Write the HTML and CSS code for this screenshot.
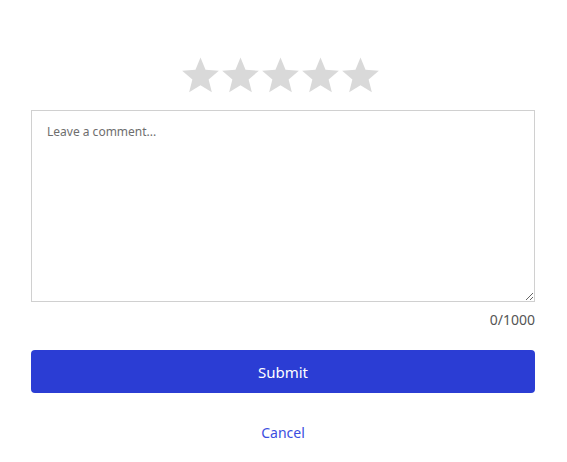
FILE: index.html
```html
<!DOCTYPE html>
<html lang="en">
<head>
    <meta charset="UTF-8">
    <title>Leave a review</title>
    <link rel="stylesheet" href="styles.css">
</head>
<body>
    <div class="review">
        <div class="stars">
            <svg class="star" viewBox="0.6 1.3 22.8 22"><path d="M12 1.5l3.1 7.6 8.2.6-6.3 5.3 2 8-7-4.4-7 4.4 2-8L.7 9.7l8.2-.6z"/></svg>
            <svg class="star" viewBox="0.6 1.3 22.8 22"><path d="M12 1.5l3.1 7.6 8.2.6-6.3 5.3 2 8-7-4.4-7 4.4 2-8L.7 9.7l8.2-.6z"/></svg>
            <svg class="star" viewBox="0.6 1.3 22.8 22"><path d="M12 1.5l3.1 7.6 8.2.6-6.3 5.3 2 8-7-4.4-7 4.4 2-8L.7 9.7l8.2-.6z"/></svg>
            <svg class="star" viewBox="0.6 1.3 22.8 22"><path d="M12 1.5l3.1 7.6 8.2.6-6.3 5.3 2 8-7-4.4-7 4.4 2-8L.7 9.7l8.2-.6z"/></svg>
            <svg class="star" viewBox="0.6 1.3 22.8 22"><path d="M12 1.5l3.1 7.6 8.2.6-6.3 5.3 2 8-7-4.4-7 4.4 2-8L.7 9.7l8.2-.6z"/></svg>
        </div>
        <textarea class="comment" placeholder="Leave a comment..."></textarea>
        <div class="counter">0/1000</div>
        <button class="submit">Submit</button>
        <a class="cancel" href="#">Cancel</a>
    </div>
</body>
</html>
```

FILE: styles.css
```css
body {
    margin: 0;
    font-family: "Noto Sans", "Open Sans", sans-serif;
    background: #fff;
}
.review {
    width: 504px;
    margin: 0 31px;
    padding-top: 56px;
    display: flex;
    flex-direction: column;
}
.stars {
    display: flex;
    justify-content: center;
    gap: 3px;
    padding-right: 6px;
    margin-bottom: 16px;
}
.star {
    width: 37px;
    height: 38px;
    fill: #d9d9d9;
}
.comment {
    box-sizing: border-box;
    width: 100%;
    height: 192px;
    border: 1px solid #d0d0d0;
    padding: 12px 15px;
    font-family: inherit;
    font-size: 12px;
    color: #333;
    resize: vertical;
    outline: none;
}
.comment::placeholder {
    color: #6e6e6e;
}
.counter {
    text-align: right;
    font-size: 14px;
    color: #555;
    margin-top: 8px;
}
.submit {
    margin-top: 21px;
    height: 43px;
    border: none;
    border-radius: 4px;
    background: #2b3dd4;
    color: #fff;
    font-family: inherit;
    font-size: 15px;
    cursor: pointer;
}
.cancel {
    align-self: center;
    margin-top: 30px;
    font-size: 14px;
    color: #3b4ee0;
    text-decoration: none;
}
```
